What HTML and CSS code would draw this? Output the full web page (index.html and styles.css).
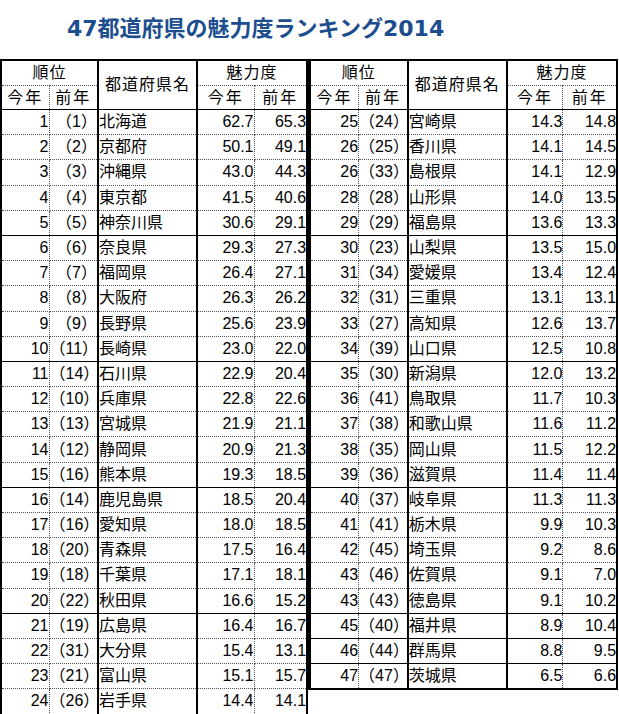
FILE: index.html
```html
<!DOCTYPE html>
<html lang="ja">
<head>
<meta charset="utf-8">
<title>47都道府県の魅力度ランキング2014</title>
<link rel="stylesheet" href="styles.css">
</head>
<body>
<div class="page">
  <h1 class="title">47都道府県の魅力度ランキング2014</h1>
  <div class="tables">
    <table class="rank left">
      <colgroup><col class="c1"><col class="c2"><col class="c3"><col class="c4"><col class="c5"></colgroup>
      <thead>
        <tr class="hr1"><th colspan="2" class="grp">順位</th><th rowspan="2" class="nameh">都道府県名</th><th colspan="2" class="grp">魅力度</th></tr>
        <tr class="hr2"><th class="sa">今年</th><th class="sb">前年</th><th class="sc">今年</th><th class="sd">前年</th></tr>
      </thead>
      <tbody>
        <tr><td class="r">1</td><td class="p">（1）</td><td class="n">北海道</td><td class="s">62.7</td><td class="t">65.3</td></tr>
        <tr><td class="r">2</td><td class="p">（2）</td><td class="n">京都府</td><td class="s">50.1</td><td class="t">49.1</td></tr>
        <tr><td class="r">3</td><td class="p">（3）</td><td class="n">沖縄県</td><td class="s">43.0</td><td class="t">44.3</td></tr>
        <tr><td class="r">4</td><td class="p">（4）</td><td class="n">東京都</td><td class="s">41.5</td><td class="t">40.6</td></tr>
        <tr class="end"><td class="r">5</td><td class="p">（5）</td><td class="n">神奈川県</td><td class="s">30.6</td><td class="t">29.1</td></tr>
        <tr><td class="r">6</td><td class="p">（6）</td><td class="n">奈良県</td><td class="s">29.3</td><td class="t">27.3</td></tr>
        <tr><td class="r">7</td><td class="p">（7）</td><td class="n">福岡県</td><td class="s">26.4</td><td class="t">27.1</td></tr>
        <tr><td class="r">8</td><td class="p">（8）</td><td class="n">大阪府</td><td class="s">26.3</td><td class="t">26.2</td></tr>
        <tr><td class="r">9</td><td class="p">（9）</td><td class="n">長野県</td><td class="s">25.6</td><td class="t">23.9</td></tr>
        <tr class="end"><td class="r">10</td><td class="p">（11）</td><td class="n">長崎県</td><td class="s">23.0</td><td class="t">22.0</td></tr>
        <tr><td class="r">11</td><td class="p">（14）</td><td class="n">石川県</td><td class="s">22.9</td><td class="t">20.4</td></tr>
        <tr><td class="r">12</td><td class="p">（10）</td><td class="n">兵庫県</td><td class="s">22.8</td><td class="t">22.6</td></tr>
        <tr><td class="r">13</td><td class="p">（13）</td><td class="n">宮城県</td><td class="s">21.9</td><td class="t">21.1</td></tr>
        <tr><td class="r">14</td><td class="p">（12）</td><td class="n">静岡県</td><td class="s">20.9</td><td class="t">21.3</td></tr>
        <tr class="end"><td class="r">15</td><td class="p">（16）</td><td class="n">熊本県</td><td class="s">19.3</td><td class="t">18.5</td></tr>
        <tr><td class="r">16</td><td class="p">（14）</td><td class="n">鹿児島県</td><td class="s">18.5</td><td class="t">20.4</td></tr>
        <tr><td class="r">17</td><td class="p">（16）</td><td class="n">愛知県</td><td class="s">18.0</td><td class="t">18.5</td></tr>
        <tr><td class="r">18</td><td class="p">（20）</td><td class="n">青森県</td><td class="s">17.5</td><td class="t">16.4</td></tr>
        <tr><td class="r">19</td><td class="p">（18）</td><td class="n">千葉県</td><td class="s">17.1</td><td class="t">18.1</td></tr>
        <tr class="end"><td class="r">20</td><td class="p">（22）</td><td class="n">秋田県</td><td class="s">16.6</td><td class="t">15.2</td></tr>
        <tr><td class="r">21</td><td class="p">（19）</td><td class="n">広島県</td><td class="s">16.4</td><td class="t">16.7</td></tr>
        <tr><td class="r">22</td><td class="p">（31）</td><td class="n">大分県</td><td class="s">15.4</td><td class="t">13.1</td></tr>
        <tr><td class="r">23</td><td class="p">（21）</td><td class="n">富山県</td><td class="s">15.1</td><td class="t">15.7</td></tr>
        <tr><td class="r">24</td><td class="p">（26）</td><td class="n">岩手県</td><td class="s">14.4</td><td class="t">14.1</td></tr>
      </tbody>
    </table>
    <table class="rank right">
      <colgroup><col class="c1"><col class="c2"><col class="c3"><col class="c4"><col class="c5"></colgroup>
      <thead>
        <tr class="hr1"><th colspan="2" class="grp">順位</th><th rowspan="2" class="nameh">都道府県名</th><th colspan="2" class="grp">魅力度</th></tr>
        <tr class="hr2"><th class="sa">今年</th><th class="sb">前年</th><th class="sc">今年</th><th class="sd">前年</th></tr>
      </thead>
      <tbody>
        <tr><td class="r">25</td><td class="p">（24）</td><td class="n">宮崎県</td><td class="s">14.3</td><td class="t">14.8</td></tr>
        <tr><td class="r">26</td><td class="p">（25）</td><td class="n">香川県</td><td class="s">14.1</td><td class="t">14.5</td></tr>
        <tr><td class="r">26</td><td class="p">（33）</td><td class="n">島根県</td><td class="s">14.1</td><td class="t">12.9</td></tr>
        <tr><td class="r">28</td><td class="p">（28）</td><td class="n">山形県</td><td class="s">14.0</td><td class="t">13.5</td></tr>
        <tr class="end"><td class="r">29</td><td class="p">（29）</td><td class="n">福島県</td><td class="s">13.6</td><td class="t">13.3</td></tr>
        <tr><td class="r">30</td><td class="p">（23）</td><td class="n">山梨県</td><td class="s">13.5</td><td class="t">15.0</td></tr>
        <tr><td class="r">31</td><td class="p">（34）</td><td class="n">愛媛県</td><td class="s">13.4</td><td class="t">12.4</td></tr>
        <tr><td class="r">32</td><td class="p">（31）</td><td class="n">三重県</td><td class="s">13.1</td><td class="t">13.1</td></tr>
        <tr><td class="r">33</td><td class="p">（27）</td><td class="n">高知県</td><td class="s">12.6</td><td class="t">13.7</td></tr>
        <tr class="end"><td class="r">34</td><td class="p">（39）</td><td class="n">山口県</td><td class="s">12.5</td><td class="t">10.8</td></tr>
        <tr><td class="r">35</td><td class="p">（30）</td><td class="n">新潟県</td><td class="s">12.0</td><td class="t">13.2</td></tr>
        <tr><td class="r">36</td><td class="p">（41）</td><td class="n">鳥取県</td><td class="s">11.7</td><td class="t">10.3</td></tr>
        <tr><td class="r">37</td><td class="p">（38）</td><td class="n">和歌山県</td><td class="s">11.6</td><td class="t">11.2</td></tr>
        <tr><td class="r">38</td><td class="p">（35）</td><td class="n">岡山県</td><td class="s">11.5</td><td class="t">12.2</td></tr>
        <tr class="end"><td class="r">39</td><td class="p">（36）</td><td class="n">滋賀県</td><td class="s">11.4</td><td class="t">11.4</td></tr>
        <tr><td class="r">40</td><td class="p">（37）</td><td class="n">岐阜県</td><td class="s">11.3</td><td class="t">11.3</td></tr>
        <tr><td class="r">41</td><td class="p">（41）</td><td class="n">栃木県</td><td class="s">9.9</td><td class="t">10.3</td></tr>
        <tr><td class="r">42</td><td class="p">（45）</td><td class="n">埼玉県</td><td class="s">9.2</td><td class="t">8.6</td></tr>
        <tr><td class="r">43</td><td class="p">（46）</td><td class="n">佐賀県</td><td class="s">9.1</td><td class="t">7.0</td></tr>
        <tr class="end"><td class="r">43</td><td class="p">（43）</td><td class="n">徳島県</td><td class="s">9.1</td><td class="t">10.2</td></tr>
        <tr class="end"><td class="r">45</td><td class="p">（40）</td><td class="n">福井県</td><td class="s">8.9</td><td class="t">10.4</td></tr>
        <tr class="end"><td class="r">46</td><td class="p">（44）</td><td class="n">群馬県</td><td class="s">8.8</td><td class="t">9.5</td></tr>
        <tr class="last"><td class="r">47</td><td class="p">（47）</td><td class="n">茨城県</td><td class="s">6.5</td><td class="t">6.6</td></tr>
      </tbody>
    </table>
  </div>
</div>
</body>
</html>
```
FILE: styles.css
```css
html, body {
  margin: 0;
  padding: 0;
  background: #ffffff;
}

.page {
  width: 619px;
  height: 714px;
  overflow: hidden;
}

.title {
  margin: 0;
  height: 59px;
  box-sizing: border-box;
  padding: 14px 0 0 67px;
  font-family: "DejaVu Sans", "Noto Sans CJK JP", sans-serif;
  font-weight: 700;
  font-size: 22px;
  line-height: 30px;
  color: #1c4d8f;
  letter-spacing: 0;
}

.tables {
  display: flex;
  align-items: flex-start;
}

.rank {
  border-collapse: collapse;
  table-layout: fixed;
  font-family: "Liberation Sans", "Noto Sans CJK JP", sans-serif;
  font-size: 16px;
  color: #000;
  border-top: 2px solid #000;
  border-left: 2px solid #000;
  border-right: 2px solid #000;
}

.rank.left {
  width: 308px;
}

.rank.right {
  width: 310px;
  border-bottom: 2px solid #000;
  border-left-width: 3px;
}

.left .c1 { width: 48px; }
.left .c2 { width: 49px; }
.left .c3 { width: 99px; }
.left .c4 { width: 57px; }
.left .c5 { width: 53px; }

.right .c1 { width: 49px; }
.right .c2 { width: 49px; }
.right .c3 { width: 99px; }
.right .c4 { width: 56px; }
.right .c5 { width: 54px; }

.rank th,
.rank td {
  padding: 0;
  white-space: nowrap;
  overflow: hidden;
  line-height: 20px;
}

.rank th {
  font-weight: 400;
  text-align: center;
}

.hr1 th { height: 24px; }
.hr2 th { height: 23px; }

.grp {
  border-bottom: 1px dotted #555;
  border-right: 2px solid #000;
  letter-spacing: 1px;
}

.nameh {
  border-right: 2px solid #000;
  border-bottom: 1px solid #000;
  letter-spacing: 1px;
  padding-top: 2px;
}

.sa, .sc {
  border-right: 1px dotted #555;
  border-bottom: 1px solid #000;
  letter-spacing: 2px;
}

.sb, .sd {
  border-right: 2px solid #000;
  border-bottom: 1px solid #000;
  letter-spacing: 2px;
}

.rank td {
  height: 24.2px;
  border-bottom: 1px dotted #555;
  vertical-align: middle;
}

.rank tr.end td {
  border-bottom: 1px solid #000;
}

.rank tr.last td {
  border-bottom: 2px solid #000;
}

.r {
  text-align: right;
  padding-right: 2px;
  border-right: 1px dotted #555;
}

.p {
  text-align: right;
  padding-right: 0;
  border-right: 2px solid #000;
}

.n {
  text-align: left;
  padding-left: 2px;
  border-right: 2px solid #000;
}

.s {
  text-align: right;
  padding-right: 3px;
  border-right: 1px dotted #555;
}

.t {
  text-align: right;
  padding-right: 1px;
}
```
